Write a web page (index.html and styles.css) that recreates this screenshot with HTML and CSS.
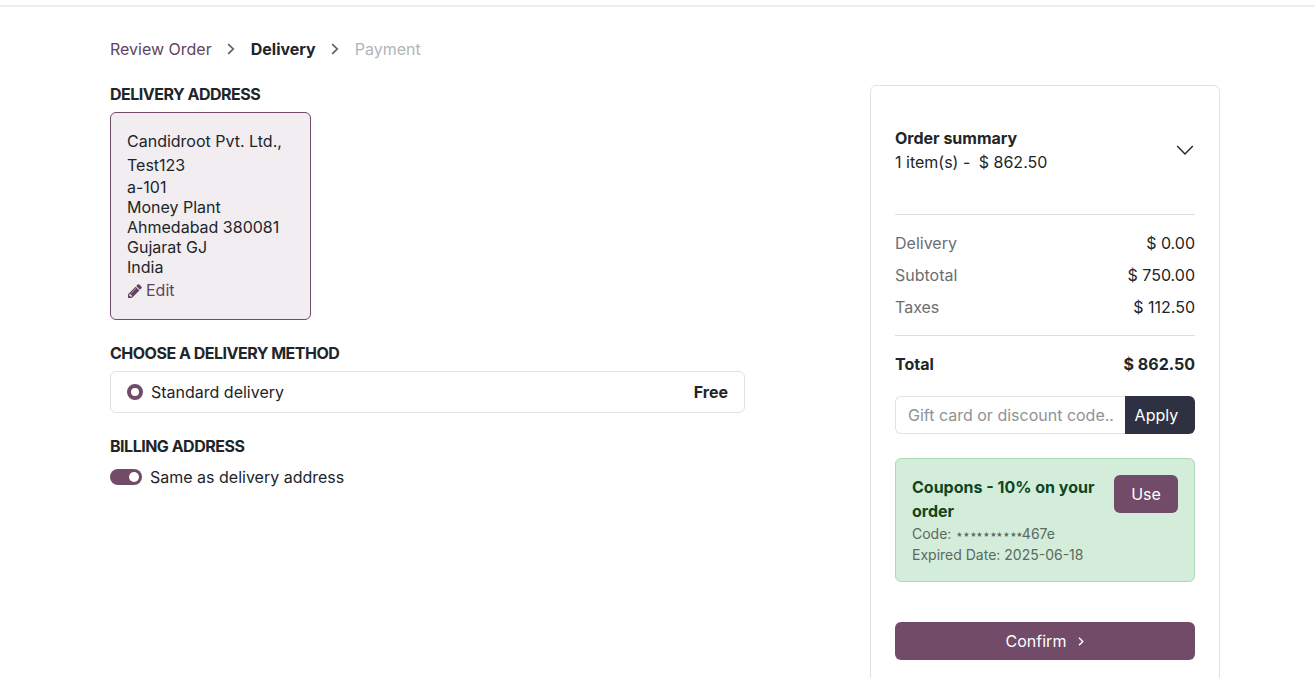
FILE: index.html
```html
<!DOCTYPE html>
<html lang="en">
<head>
<meta charset="utf-8">
<title>Checkout - Delivery</title>
<link rel="stylesheet" href="styles.css">
</head>
<body>
<div class="topbar"></div>
<main class="page">
  <section class="main-col">
    <nav class="steps">
      <a class="step-link">Review Order</a>
      <svg class="sep" viewBox="0 0 8 12"><path d="M1.2 1.2 6.2 6 1.2 10.8"/></svg>
      <span class="step-current">Delivery</span>
      <svg class="sep" viewBox="0 0 8 12"><path d="M1.2 1.2 6.2 6 1.2 10.8"/></svg>
      <span class="step-next">Payment</span>
    </nav>
    <h4 class="heading">DELIVERY ADDRESS</h4>
    <div class="address">
      <div class="address-name">Candidroot Pvt. Ltd., Test123</div>
      <div class="address-lines">a-101<br>Money Plant<br>Ahmedabad 380081<br>Gujarat GJ<br>India</div>
      <a class="edit"><svg class="pencil" viewBox="0 0 1536 1536"><path d="M363 1408l91-91-235-235-91 91v107h128v128h107zM886 480q0-22-22-22-10 0-17 7L305 1007q-7 7-7 17 0 22 22 22 10 0 17-7l542-542q7-7 7-17zM832 288l416 416-832 832H0v-416zM1515 384q0 53-37 90l-166 166-416-416 166-165q36-38 90-38 53 0 91 38l235 234q37 39 37 91z"/></svg><span>Edit</span></a>
    </div>
    <h4 class="heading">CHOOSE A DELIVERY METHOD</h4>
    <div class="method">
      <span class="radio"></span>
      <span>Standard delivery</span>
      <b class="price">Free</b>
    </div>
    <h4 class="heading">BILLING ADDRESS</h4>
    <div class="same"><span class="switch"></span><span>Same as delivery address</span></div>
  </section>
  <aside class="summary">
    <div class="summary-head">
      <div><b>Order summary</b><br>1 item(s) -&nbsp; <span class="amount">$ 862.50</span></div>
      <svg class="chevron" viewBox="0 0 20 20"><path d="M2.2 6 10 13.9 17.8 6"/></svg>
    </div>
    <div class="totals">
      <div class="row"><span class="muted">Delivery</span><span>$ 0.00</span></div>
      <div class="row"><span class="muted">Subtotal</span><span>$ 750.00</span></div>
      <div class="row"><span class="muted">Taxes</span><span>$ 112.50</span></div>
    </div>
    <div class="grand"><span>Total</span><span>$ 862.50</span></div>
    <div class="promo"><div class="promo-input">Gift card or discount code..</div><div class="apply">Apply</div></div>
    <div class="coupon">
      <div class="coupon-text">
        <div class="coupon-title">Coupons - 10% on your order</div>
        <div class="coupon-meta">Code: <span class="stars">⋆⋆⋆⋆⋆⋆⋆⋆⋆⋆</span>467e</div>
        <div class="coupon-meta">Expired Date: 2025-06-18</div>
      </div>
      <div class="use">Use</div>
    </div>
    <div class="confirm"><span>Confirm</span><svg class="confirm-arrow" viewBox="0 0 6 9"><path d="M1 .8 4.8 4.5 1 8.2"/></svg></div>
  </aside>
</main>
</body>
</html>
```
FILE: styles.css
```css
* { box-sizing: border-box; }
body { margin: 0; height: 690px; overflow: hidden; background: #fff; color: #212529; font: 16px/24px Inter, "Noto Sans", sans-serif; }
.topbar { height: 7px; border-bottom: 2px solid #efefef; }
.page { display: flex; align-items: flex-start; justify-content: space-between; width: 1110px; margin-left: 110px; height: 671px; overflow: hidden; }
.main-col { width: 635px; padding-top: 30px; }
.steps { display: flex; align-items: center; height: 24px; }
.step-link { color: #5f4460; }
.sep { width: 8px; height: 12px; margin: 0 16px 0 15px; fill: none; stroke: #5c5f62; stroke-width: 1.7; }
.step-current { font-weight: 700; }
.step-next { color: #b3b4b5; }
.heading { margin: 24px 0 8px; font-size: 16px; line-height: 19px; font-weight: 700; letter-spacing: -.5px; }
.address { width: 201px; height: 208px; padding: 16px; border: 1px solid #714b67; border-radius: 6px; background: #f1edf0; }
.address-lines { line-height: 20px; }
.edit { display: flex; align-items: center; height: 26px; padding-left: 1px; color: #5f4460; gap: 4px; }
.pencil { width: 14px; height: 14px; margin-top: 1px; fill: #5f4460; }
.method { display: flex; align-items: center; height: 42px; padding: 0 16px; border: 1px solid #dee2e6; border-radius: 6px; }
.radio { width: 16px; height: 16px; margin-right: 8px; border: 4px solid #714b67; border-radius: 50%; }
.price { margin-left: auto; }
.same { display: flex; align-items: center; gap: 8px; padding-top: 1px; }
.switch { display: flex; justify-content: flex-end; align-items: center; width: 32px; height: 16px; padding-right: 3px; border-radius: 8px; background: #714b67; }
.switch::after { content: ""; width: 10px; height: 10px; border-radius: 50%; background: #fff; }
.summary { width: 350px; height: 700px; margin-top: 78px; padding: 0 24px; border: 1px solid #dee2e6; border-radius: 6px; }
.summary-head { display: flex; justify-content: space-between; align-items: center; height: 129px; border-bottom: 1px solid #dedfe1; }
.amount { margin-left: -.5px; }
.chevron { width: 20px; height: 20px; fill: none; stroke: #212529; stroke-width: 1.4; }
.totals { padding: 12px 0; border-bottom: 1px solid #dedfe1; }
.row, .grand { display: flex; justify-content: space-between; }
.row { padding: 4px 0; }
.muted { color: #6b6e72; }
.grand { padding: 16px 0 20px; font-weight: 700; }
.promo { display: flex; height: 38px; line-height: 36px; }
.promo-input { flex: 1; padding-left: 12px; border: 1px solid #dee2e6; border-right: 0; border-radius: 6px 0 0 6px; color: #909294; white-space: nowrap; }
.apply { width: 70px; padding-left: 9.6px; line-height: 38px; border-radius: 0 6px 6px 0; background: #2d3142; color: #fff; }
.coupon { display: flex; align-items: flex-start; justify-content: space-between; height: 124px; margin-top: 24px; padding: 16px; border: 1px solid #a9dbb5; border-radius: 6px; background: #d4edda; }
.coupon-text { width: 190px; }
.coupon-title { font-weight: 700; color: #0e4620; }
.coupon-meta { font-size: 14px; line-height: 21px; color: #596a60; }
.stars { letter-spacing: -2.35px; }
.use { width: 64px; height: 38px; line-height: 38px; border-radius: 6px; background: #714b67; color: #fff; text-align: center; }
.confirm { display: flex; align-items: center; justify-content: center; gap: 12px; height: 38px; margin-top: 40px; border-radius: 6px; background: #714b67; color: #fff; }
.confirm-arrow { width: 6px; height: 9px; fill: none; stroke: #fff; stroke-width: 1.4; }
```
